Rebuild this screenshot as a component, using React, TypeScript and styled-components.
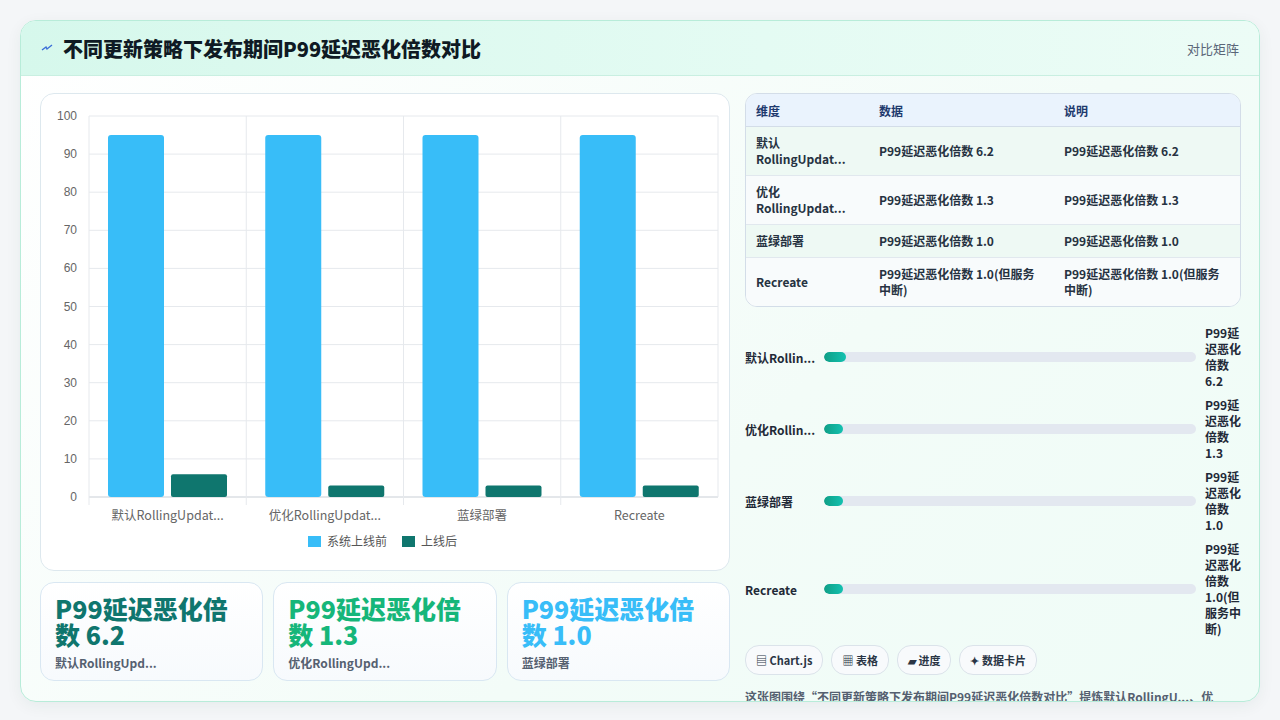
import React from "react";
import styled, { createGlobalStyle } from "styled-components";

const Global = createGlobalStyle`
  html, body { margin: 0; padding: 0; background: #f4f6f8; }
  body { font-family: "Noto Sans CJK SC", "Noto Sans", sans-serif; }
`;

type Row = { name: string; short: string; value: string; pct: number };

const rows: Row[] = [
  { name: "默认RollingUpdat...", short: "默认Rollin...", value: "P99延迟恶化倍数 6.2", pct: 6 },
  { name: "优化RollingUpdat...", short: "优化Rollin...", value: "P99延迟恶化倍数 1.3", pct: 5 },
  { name: "蓝绿部署", short: "蓝绿部署", value: "P99延迟恶化倍数 1.0", pct: 5 },
  { name: "Recreate", short: "Recreate", value: "P99延迟恶化倍数 1.0(但服务中断)", pct: 5 },
];

const chartData = [
  { label: "默认RollingUpdat...", before: 95, after: 6 },
  { label: "优化RollingUpdat...", before: 95, after: 3 },
  { label: "蓝绿部署", before: 95, after: 3 },
  { label: "Recreate", before: 95, after: 3 },
];

const Page = styled.div`
  width: 1280px;
  height: 720px;
  padding: 20px;
  box-sizing: border-box;
`;

const Frame = styled.div`
  height: 680px;
  border: 1px solid #b8ecd9;
  border-radius: 16px;
  overflow: hidden;
  background: linear-gradient(135deg, #ffffff 0%, #f3fcf8 60%, #effcf7 100%);
  box-shadow: 0 4px 16px rgba(15, 60, 50, 0.06);
  display: flex;
  flex-direction: column;
`;

const Header = styled.div`
  height: 54px;
  flex-shrink: 0;
  display: flex;
  align-items: center;
  justify-content: space-between;
  padding: 0 20px;
  background: linear-gradient(90deg, #d6f8ec 0%, #e4fbf3 60%, #ecfcf6 100%);
  border-bottom: 1px solid #c9efe1;
`;

const Title = styled.h1`
  margin: 0;
  font-size: 20px;
  font-weight: 800;
  color: #0f1a24;
  display: flex;
  align-items: center;
  gap: 10px;
`;

const HeaderLink = styled.span`
  font-size: 13px;
  color: #5a6678;
`;

const Body = styled.div`
  flex: 1;
  min-height: 0;
  display: grid;
  grid-template-columns: 690px 496px;
  gap: 15px;
  padding: 17px 19px 0 19px;
`;

const LeftCol = styled.div`
  display: flex;
  flex-direction: column;
  gap: 11px;
`;

const ChartCard = styled.div`
  height: 478px;
  box-sizing: border-box;
  background: #fff;
  border: 1px solid #dde8ee;
  border-radius: 14px;
`;

const KpiRow = styled.div`
  display: grid;
  grid-template-columns: repeat(3, 1fr);
  gap: 10px;
`;

const Kpi = styled.div`
  height: 99px;
  box-sizing: border-box;
  border: 1px solid #d9e7f2;
  border-radius: 14px;
  background: linear-gradient(180deg, #ffffff, #f7fafd);
  padding: 12px 14px;
`;

const KpiValue = styled.div<{ $color: string }>`
  font-size: 25px;
  line-height: 26px;
  font-weight: 800;
  color: ${(p) => p.$color};
`;

const KpiLabel = styled.div`
  margin-top: 7px;
  font-size: 12px;
  font-weight: 600;
  color: #556070;
`;

const RightCol = styled.div`
  display: flex;
  flex-direction: column;
  min-width: 0;
`;

const Table = styled.table`
  width: 100%;
  border-collapse: separate;
  border-spacing: 0;
  border: 1px solid #d3dde8;
  border-radius: 12px;
  overflow: hidden;
  font-size: 12px;
  font-weight: 600;
  color: #263241;
  background: #fbfdfe;
`;

const Th = styled.th`
  text-align: left;
  background: #eaf3fd;
  color: #1e3a6e;
  font-weight: 700;
  height: 32px;
  padding: 0 10px;
  border-bottom: 1px solid #d3dde8;
`;

const Td = styled.td<{ $alt: boolean }>`
  padding: 8px 10px;
  line-height: 16px;
  background: ${(p) => (p.$alt ? "#eef9f4" : "#f8fbfc")};
  border-bottom: 1px solid #e1e8ee;
  vertical-align: middle;
  tr:last-child & {
    border-bottom: none;
  }
`;

const Bars = styled.div`
  margin-top: 14px;
  display: flex;
  flex-direction: column;
`;

const BarRow = styled.div`
  padding: 4px 0;
  display: grid;
  grid-template-columns: 79px 1fr 36px;
  align-items: center;
`;

const BarLabel = styled.div`
  font-size: 12px;
  font-weight: 700;
  color: #1f2937;
  white-space: nowrap;
`;

const Track = styled.div`
  height: 10px;
  border-radius: 5px;
  background: #e3e8f0;
  margin-right: 9px;
  overflow: hidden;
`;

const Fill = styled.div`
  height: 100%;
  border-radius: 5px;
  background: linear-gradient(90deg, #0f9f86, #14c1b0);
`;

const BarValue = styled.div`
  font-size: 12px;
  line-height: 16px;
  font-weight: 700;
  color: #1f2937;
`;

const Chips = styled.div`
  display: flex;
  gap: 8px;
  margin-top: 4px;
`;

const Chip = styled.span`
  font-size: 11px;
  font-weight: 600;
  color: #2a3545;
  border: 1px solid #dbe3ea;
  border-radius: 14px;
  background: #f8fafc;
  padding: 6px 10px;
`;

const Summary = styled.p`
  margin: 13px 0 0;
  font-size: 12px;
  font-weight: 600;
  color: #556070;
  white-space: nowrap;
`;

const Chart: React.FC = () => {
  const x0 = 48, x1 = 677, yTop = 22, yBot = 403;
  const step = (yBot - yTop) / 10;
  const cw = (x1 - x0) / chartData.length;
  return (
    <svg width="688" height="476" style={{ display: "block" }}>
      {Array.from({ length: 11 }, (_, i) => {
        const y = yBot - i * step;
        return (
          <g key={i}>
            <line x1={x0} x2={x1} y1={y} y2={y} stroke={i === 0 ? "#c9cfd6" : "#e6e9ed"} />
            <text x={36} y={y + 4} textAnchor="end" fontSize="12" fill="#666" fontFamily="Liberation Sans, sans-serif">
              {i * 10}
            </text>
          </g>
        );
      })}
      {chartData.map((d, i) => (
        <line key={"v" + i} x1={x0 + i * cw} x2={x0 + i * cw} y1={yTop} y2={yBot + 8} stroke="#e6e9ed" />
      ))}
      <line x1={x1} x2={x1} y1={yTop} y2={yBot} stroke="#e6e9ed" />
      {chartData.map((d, i) => {
        const cx = x0 + i * cw;
        const hb = d.before * step / 10;
        const ha = d.after * step / 10;
        return (
          <g key={i}>
            <rect x={cx + 19} y={yBot - hb} width={56} height={hb} rx={3} fill="#38bdf8" />
            <rect x={cx + 82} y={yBot - ha} width={56} height={ha} rx={2} fill="#0f766e" />
            <text x={cx + cw / 2} y={yBot + 23} textAnchor="middle" fontSize="12.5" fill="#666" fontFamily="Noto Sans CJK SC, sans-serif">
              {d.label}
            </text>
          </g>
        );
      })}
      <rect x={267} y={442} width={13} height={11} fill="#38bdf8" />
      <text x={286} y={452} fontSize="12" fill="#555" fontFamily="Noto Sans CJK SC, sans-serif">系统上线前</text>
      <rect x={361} y={442} width={13} height={11} fill="#0f766e" />
      <text x={380} y={452} fontSize="12" fill="#555" fontFamily="Noto Sans CJK SC, sans-serif">上线后</text>
    </svg>
  );
};

const App: React.FC = () => {
  return (
    <Page>
      <Global />
      <Frame>
        <Header>
          <Title>
            <svg width="12" height="10" viewBox="0 0 12 10">
              <path d="M1 7 L5 4 L6 6 L11 2" stroke="#3b6fd8" strokeWidth="1.4" fill="none" />
            </svg>
            不同更新策略下发布期间P99延迟恶化倍数对比
          </Title>
          <HeaderLink>对比矩阵</HeaderLink>
        </Header>
        <Body>
          <LeftCol>
            <ChartCard>
              <Chart />
            </ChartCard>
            <KpiRow>
              <Kpi>
                <KpiValue $color="#0f766e">P99延迟恶化倍数 6.2</KpiValue>
                <KpiLabel>默认RollingUpd...</KpiLabel>
              </Kpi>
              <Kpi>
                <KpiValue $color="#16b67a">P99延迟恶化倍数 1.3</KpiValue>
                <KpiLabel>优化RollingUpd...</KpiLabel>
              </Kpi>
              <Kpi>
                <KpiValue $color="#38bdf8">P99延迟恶化倍数 1.0</KpiValue>
                <KpiLabel>蓝绿部署</KpiLabel>
              </Kpi>
            </KpiRow>
          </LeftCol>
          <RightCol>
            <Table>
              <colgroup>
                <col style={{ width: 123 }} />
                <col style={{ width: 185 }} />
                <col />
              </colgroup>
              <thead>
                <tr>
                  <Th>维度</Th>
                  <Th>数据</Th>
                  <Th>说明</Th>
                </tr>
              </thead>
              <tbody>
                {rows.map((r, i) => (
                  <tr key={i}>
                    <Td $alt={i % 2 === 0}>
                      {i < 2 ? (
                        <>
                          {r.name.slice(0, 2)}
                          <br />
                          {r.name.slice(2)}
                        </>
                      ) : (
                        r.name
                      )}
                    </Td>
                    <Td $alt={i % 2 === 0}>{r.value}</Td>
                    <Td $alt={i % 2 === 0}>{r.value}</Td>
                  </tr>
                ))}
              </tbody>
            </Table>
            <Bars>
              {rows.map((r, i) => (
                <BarRow key={i}>
                  <BarLabel>{r.short}</BarLabel>
                  <Track>
                    <Fill style={{ width: `${r.pct}%` }} />
                  </Track>
                  <BarValue>{r.value}</BarValue>
                </BarRow>
              ))}
            </Bars>
            <Chips>
              <Chip>▤ Chart.js</Chip>
              <Chip>▦ 表格</Chip>
              <Chip>▰ 进度</Chip>
              <Chip>✦ 数据卡片</Chip>
            </Chips>
            <Summary>这张图围绕“不同更新策略下发布期间P99延迟恶化倍数对比”提炼默认RollingU...、优</Summary>
          </RightCol>
        </Body>
      </Frame>
    </Page>
  );
};

export default App;
